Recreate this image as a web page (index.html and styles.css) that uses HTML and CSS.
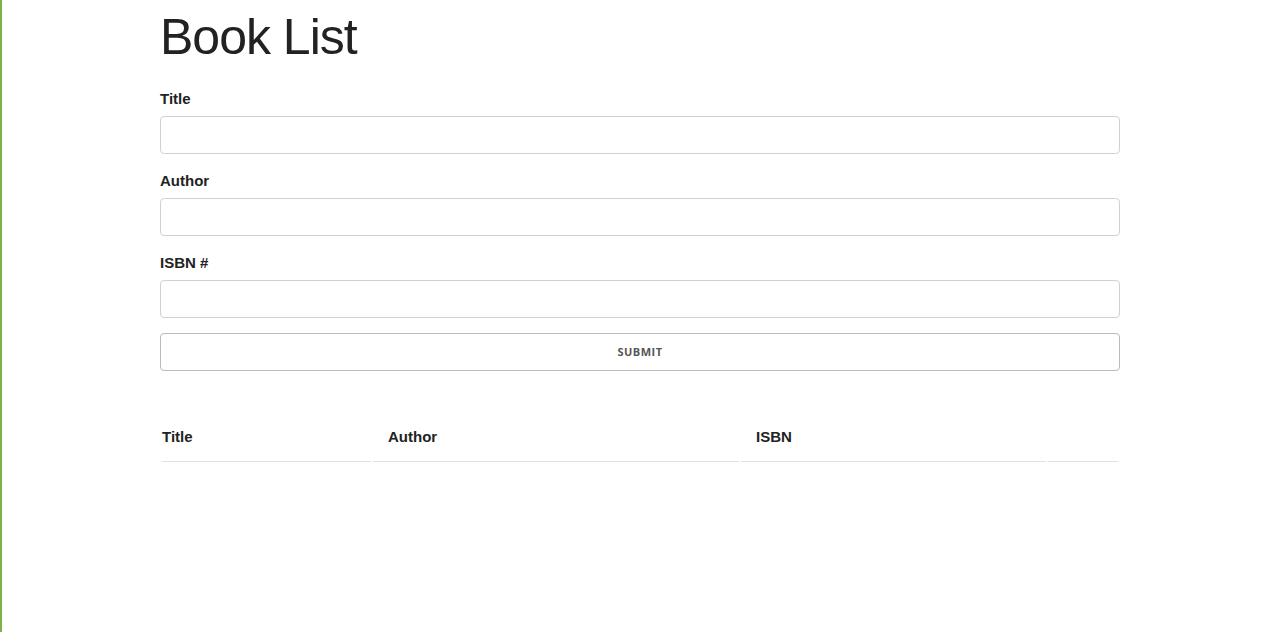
FILE: index.html
```html
<!DOCTYPE html>
<html lang="en">
<head>
<meta charset="utf-8">
<title>Book List</title>
<link rel="stylesheet" href="styles.css">
</head>
<body>
<div class="page">
  <div class="container">
    <h1 class="title">Book List</h1>
    <form class="book-form">
      <label class="field-label" for="title">Title</label>
      <input class="field-input" type="text" id="title">
      <label class="field-label" for="author">Author</label>
      <input class="field-input" type="text" id="author">
      <label class="field-label" for="isbn">ISBN #</label>
      <input class="field-input" type="text" id="isbn">
      <input class="submit-btn" type="submit" value="Submit">
    </form>
    <table class="book-table">
      <thead>
        <tr>
          <th class="col-title">Title</th>
          <th class="col-author">Author</th>
          <th class="col-isbn">ISBN</th>
          <th class="col-action"></th>
        </tr>
      </thead>
      <tbody></tbody>
    </table>
  </div>
</div>
</body>
</html>
```
FILE: styles.css
```css
html, body {
  margin: 0;
  padding: 0;
  height: 100%;
}
body {
  background: #fff;
  color: #222;
  font-family: "Liberation Sans", Arial, sans-serif;
  font-size: 15px;
  line-height: 1.6;
}
.page {
  min-height: 100%;
  border-left: 2px solid #7cb146;
  box-sizing: border-box;
  padding-left: 158px;
}
.container {
  width: 960px;
  padding-top: 7px;
}
.title {
  margin: 0 0 20px 0;
  font-size: 50px;
  font-weight: 300;
  line-height: 60px;
  letter-spacing: -1px;
  color: #222;
}
.book-form {
  display: flex;
  flex-direction: column;
}
.field-label {
  display: block;
  font-weight: 700;
  margin-bottom: 5px;
  line-height: 24px;
}
.field-input {
  height: 38px;
  box-sizing: border-box;
  padding: 6px 10px;
  border: 1px solid #d1d1d1;
  border-radius: 4px;
  background: #fff;
  margin: 0 0 15px 0;
  font: inherit;
  width: 100%;
}
.submit-btn {
  height: 38px;
  box-sizing: border-box;
  margin: 0;
  padding: 0 30px 1px;
  width: 100%;
  background: transparent;
  border: 1px solid #bbb;
  border-radius: 4px;
  color: #555;
  font-family: "Open Sans", "DejaVu Sans", sans-serif;
  font-size: 11px;
  font-weight: 700;
  letter-spacing: 0.5px;
  text-transform: uppercase;
  text-align: center;
  cursor: pointer;
}
.book-table {
  width: 960px;
  margin-top: 40px;
  border-collapse: separate;
  border-spacing: 2px;
}
.book-table th {
  text-align: left;
  font-weight: 700;
  padding: 12px 15px;
  line-height: 24px;
  border-bottom: 1px solid #e1e1e1;
}
.book-table .col-title {
  width: 194px;
  padding-left: 0;
}
.book-table .col-author {
  width: 336px;
}
.book-table .col-isbn {
  width: 275px;
}
.book-table .col-action {
  width: 70px;
  padding: 12px 0;
}
```
